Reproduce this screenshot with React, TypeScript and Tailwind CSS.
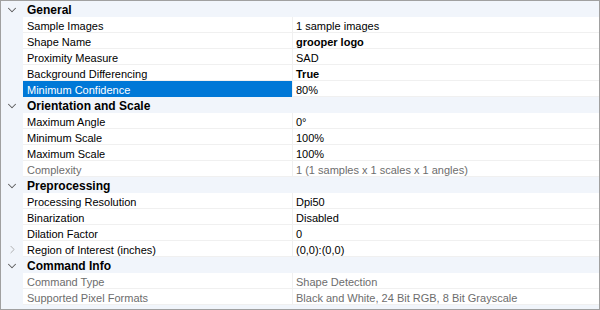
import { ChevronDown, ChevronRight } from "lucide-react";

type Prop = {
  label: string;
  value: string;
  bold?: boolean;
  muted?: boolean;
  selected?: boolean;
  expandable?: boolean;
};

type Section = { title: string; items: Prop[] };

const sections: Section[] = [
  {
    title: "General",
    items: [
      { label: "Sample Images", value: "1 sample images" },
      { label: "Shape Name", value: "grooper logo", bold: true },
      { label: "Proximity Measure", value: "SAD" },
      { label: "Background Differencing", value: "True", bold: true },
      { label: "Minimum Confidence", value: "80%", selected: true },
    ],
  },
  {
    title: "Orientation and Scale",
    items: [
      { label: "Maximum Angle", value: "0°" },
      { label: "Minimum Scale", value: "100%" },
      { label: "Maximum Scale", value: "100%" },
      { label: "Complexity", value: "1 (1 samples x 1 scales x 1 angles)", muted: true },
    ],
  },
  {
    title: "Preprocessing",
    items: [
      { label: "Processing Resolution", value: "Dpi50" },
      { label: "Binarization", value: "Disabled" },
      { label: "Dilation Factor", value: "0" },
      { label: "Region of Interest (inches)", value: "(0,0):(0,0)", expandable: true },
    ],
  },
  {
    title: "Command Info",
    items: [
      { label: "Command Type", value: "Shape Detection", muted: true },
      {
        label: "Supported Pixel Formats",
        value: "Black and White, 24 Bit RGB, 8 Bit Grayscale",
        muted: true,
      },
    ],
  },
];

function Row({ p }: { p: Prop }) {
  return (
    <div className="flex h-4">
      <div className="w-[22px] shrink-0 flex items-center justify-center">
        {p.expandable && (
          <ChevronRight size={13} strokeWidth={1.5} className="text-[#a0a0a0] ml-[1px]" />
        )}
      </div>
      <div
        className={`w-[269px] shrink-0 pl-[4px] pt-[3px] leading-[12px] border-b truncate ${
          p.selected
            ? "bg-[#0078d7] text-white border-[#0078d7]"
            : p.muted
            ? "bg-white text-[#6d6d6d] border-[#f0f0f0]"
            : "bg-white text-black border-[#f0f0f0]"
        }`}
      >
        {p.label}
      </div>
      <div
        className={`flex-1 pl-[3px] pt-[3px] leading-[12px] bg-white border-l border-b border-[#f0f0f0] truncate ${
          p.bold ? "font-bold" : ""
        } ${p.muted ? "text-[#6d6d6d]" : "text-black"}`}
      >
        {p.value}
      </div>
    </div>
  );
}

export default function App() {
  return (
    <div className="w-[600px] h-[310px] bg-[#f1f5fb] border border-[#a0a0a0] overflow-hidden text-[11px] font-['Liberation_Sans',Arial,sans-serif]">
      {sections.map((s) => (
        <div key={s.title}>
          <div className="flex h-4">
            <div className="w-[22px] shrink-0 flex items-center justify-center pt-[1px]">
              <ChevronDown size={14} strokeWidth={1.75} className="text-[#5a5a5a]" />
            </div>
            <span className="pl-[4px] pt-[3px] leading-[12px] font-bold text-[12px] text-black">
              {s.title}
            </span>
          </div>
          {s.items.map((p) => (
            <Row key={p.label} p={p} />
          ))}
        </div>
      ))}
    </div>
  );
}
